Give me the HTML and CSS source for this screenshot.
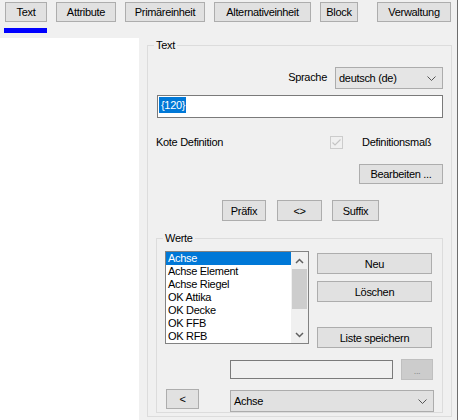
FILE: index.html
```html
<!DOCTYPE html>
<html>
<head>
<meta charset="utf-8">
<link rel="stylesheet" href="styles.css">
</head>
<body>
<div class="window">
  <div class="tabbar">
    <div class="btn tab w-text">Text</div>
    <div class="btn tab w-attr">Attribute</div>
    <div class="btn tab w-prim">Primäreinheit</div>
    <div class="btn tab w-alt">Alternativeinheit</div>
    <div class="btn tab w-block">Block</div>
    <div class="btn tab w-verw">Verwaltung</div>
  </div>
  <div class="indicator"></div>
  <div class="main">
    <div class="tree"></div>
    <fieldset class="group text-group">
      <legend>Text</legend>
      <div class="lang-row">
        <span class="lbl">Sprache</span>
        <div class="combo combo-lang">
          <span>deutsch (de)</span>
          <svg class="chev" width="9" height="5" viewBox="0 0 9 5"><polyline points="0.5,0.5 4.5,4.5 8.5,0.5" fill="none" stroke="#555" stroke-width="1"/></svg>
        </div>
      </div>
      <div class="textbox"><span class="sel">{120}</span></div>
      <div class="kote-row">
        <span class="kote-lbl">Kote Definition</span>
        <span class="check">
          <svg width="11" height="11" viewBox="0 0 11 11"><polyline points="1.5,5.5 4,8 9.5,2.5" fill="none" stroke="#c4c4c4" stroke-width="1.2"/></svg>
        </span>
        <span>Definitionsmaß</span>
      </div>
      <div class="bearb-row">
        <div class="btn w-bearb">Bearbeiten ...</div>
      </div>
      <div class="affix-row">
        <div class="btn w-pre">Präfix</div>
        <div class="btn w-mid">&lt;&gt;</div>
        <div class="btn w-suf">Suffix</div>
      </div>
      <fieldset class="group werte-group">
        <legend>Werte</legend>
        <div class="werte-top">
          <div class="listbox">
            <div class="items">
              <div class="item selected">Achse</div>
              <div class="item">Achse Element</div>
              <div class="item">Achse Riegel</div>
              <div class="item">OK Attika</div>
              <div class="item">OK Decke</div>
              <div class="item">OK FFB</div>
              <div class="item">OK RFB</div>
            </div>
            <div class="scrollbar">
              <div class="arrow">
                <svg width="9" height="6" viewBox="0 0 9 6"><polyline points="1,5 4.5,1.5 8,5" fill="none" stroke="#606060" stroke-width="1.5"/></svg>
              </div>
              <div class="thumb"></div>
              <div class="track"></div>
              <div class="arrow">
                <svg width="9" height="6" viewBox="0 0 9 6"><polyline points="1,1 4.5,4.5 8,1" fill="none" stroke="#606060" stroke-width="1.5"/></svg>
              </div>
            </div>
          </div>
          <div class="side-buttons">
            <div class="btn w-side b-neu">Neu</div>
            <div class="btn w-side b-loe">Löschen</div>
            <div class="btn w-side b-list">Liste speichern</div>
          </div>
        </div>
        <div class="path-row">
          <div class="path-field"></div>
          <div class="btn disabled w-dots">...</div>
        </div>
        <div class="bottom-row">
          <div class="btn w-back">&lt;</div>
          <div class="combo combo-val">
            <span>Achse</span>
            <svg class="chev" width="9" height="5" viewBox="0 0 9 5"><polyline points="0.5,0.5 4.5,4.5 8.5,0.5" fill="none" stroke="#555" stroke-width="1"/></svg>
          </div>
        </div>
      </fieldset>
    </fieldset>
  </div>
</div>
</body>
</html>
```
FILE: styles.css
```css
* { box-sizing: border-box; }
html, body { margin: 0; padding: 0; }
body {
  background: #f0f0f0;
  font-family: "Liberation Sans", Arial, sans-serif;
  font-size: 11px;
  letter-spacing: -0.3px;
  color: #000;
}
.window {
  width: 458px;
  height: 420px;
  border-right: 1px solid #6d6d6d;
  overflow: hidden;
}
.btn {
  display: flex;
  align-items: center;
  justify-content: center;
  background: #e1e1e1;
  border: 1px solid #adadad;
  height: 20px;
  white-space: nowrap;
}
.btn.disabled {
  background: #cccccc;
  border-color: #bfbfbf;
  color: #8a8a8a;
}
.tabbar {
  display: flex;
  gap: 9px;
  padding: 2px 0 0 5px;
  height: 22px;
}
.w-text { width: 42px; }
.w-attr { width: 60px; }
.w-prim { width: 80px; letter-spacing: -0.35px; }
.w-alt { width: 97px; letter-spacing: -0.35px; }
.w-block { width: 38px; }
.w-verw { width: 74px; margin-left: 10px; }
.indicator {
  width: 43px;
  height: 5px;
  margin: 6px 0 0 4px;
  background: #0000ff;
}
.main {
  display: flex;
  margin-top: 5px;
  height: 382px;
}
.tree {
  width: 139px;
  height: 100%;
  background: #ffffff;
}
.group {
  margin: 0;
  padding: 0;
  min-width: 0;
  border: 1px solid #dcdcdc;
}
.group legend {
  margin-left: 6px;
  padding: 0 2px;
  line-height: 14px;
  font-size: 11px;
}
.text-group {
  margin-left: 8px;
  width: 305px;
  height: 379px;
}
.lang-row {
  display: flex;
  justify-content: flex-end;
  align-items: center;
  gap: 8px;
  margin-top: 15px;
  padding-right: 8px;
}
.lbl { position: relative; top: -1px; }
.combo {
  display: flex;
  align-items: center;
  justify-content: space-between;
  background: #e5e5e5;
  border: 1px solid #acacac;
  height: 22px;
  padding: 0 6px 0 3px;
}
.combo-lang { width: 108px; }
.textbox {
  margin: 6px 8px 0 9px;
  height: 23px;
  border: 1px solid #7a7a7a;
  background: #ffffff;
  padding: 1px 0 0 1px;
}
.sel {
  display: inline-block;
  background: #0078d7;
  color: #ffffff;
  height: 16px;
  line-height: 16px;
  padding: 0 1px 0 2px;
}
.kote-row {
  display: flex;
  align-items: center;
  height: 16px;
  margin-top: 16px;
  padding-left: 8px;
}
.kote-lbl { width: 174px; }
.check {
  width: 13px;
  height: 13px;
  border: 1px solid #cccccc;
  margin-right: 19px;
  display: flex;
  align-items: center;
  justify-content: center;
}
.bearb-row {
  display: flex;
  justify-content: flex-end;
  margin-top: 14px;
  padding-right: 8px;
}
.w-bearb { width: 84px; }
.affix-row {
  display: flex;
  margin-top: 16px;
  padding-left: 74px;
}
.affix-row .btn { height: 21px; }
.w-pre { width: 44px; margin-right: 11px; }
.w-mid { width: 45px; margin-right: 10px; }
.w-suf { width: 47px; }
.werte-group {
  margin: 10px 8px 0 8px;
  height: 182px;
}
.werte-top {
  display: flex;
  margin-top: 6px;
  padding-left: 8px;
}
.listbox {
  display: flex;
  width: 144px;
  height: 93px;
  border: 1px solid #828282;
  background: #ffffff;
}
.items { flex: 1; }
.item {
  height: 13px;
  line-height: 13px;
  padding-left: 2px;
}
.item.selected {
  background: #0078d7;
  color: #ffffff;
}
.scrollbar {
  width: 17px;
  display: flex;
  flex-direction: column;
  background: #f0f0f0;
}
.arrow {
  height: 17px;
  display: flex;
  align-items: center;
  justify-content: center;
}
.thumb {
  height: 40px;
  margin: 0 1px;
  background: #cdcdcd;
}
.track { flex: 1; }
.side-buttons {
  display: flex;
  flex-direction: column;
  margin-left: 8px;
}
.w-side { width: 115px; height: 21px; }
.b-neu { margin-top: 2px; }
.b-loe { margin-top: 7px; }
.b-list { margin-top: 25px; }
.path-row {
  display: flex;
  align-items: center;
  margin-top: 11px;
  padding-left: 73px;
  height: 21px;
}
.path-field {
  width: 163px;
  height: 19px;
  border: 1px solid #7a7a7a;
  background: #f0f0f0;
}
.w-dots { width: 32px; height: 21px; margin-left: 8px; font-size: 9px; padding-top: 3px; }
.bottom-row {
  display: flex;
  align-items: flex-start;
  margin-top: 9px;
  padding-left: 9px;
}
.w-back { width: 33px; height: 20px; }
.combo-val {
  width: 204px;
  margin-left: 31px;
  margin-top: 1px;
  background: #e1e1e1;
}
```
